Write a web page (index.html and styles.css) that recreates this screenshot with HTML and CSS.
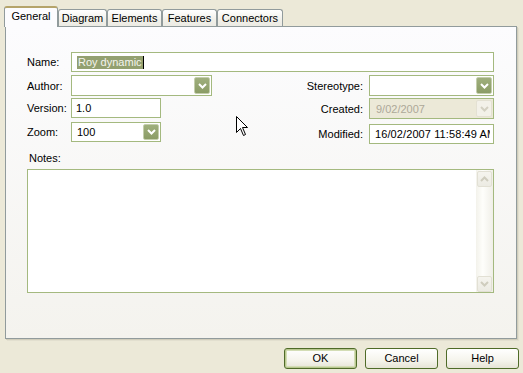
FILE: index.html
```html
<!DOCTYPE html>
<html>
<head>
<meta charset="utf-8">
<link rel="stylesheet" href="styles.css">
</head>
<body>
<div class="dialog">
  <div class="tabs">
    <div class="tab tab-active t-general">General</div>
    <div class="tab t-diagram">Diagram</div>
    <div class="tab t-elements">Elements</div>
    <div class="tab t-features">Features</div>
    <div class="tab t-connectors">Connectors</div>
  </div>
  <div class="panel">
    <div class="row row-name">
      <span class="lbl">Name:</span>
      <div class="field field-name"><span class="sel">Roy dynamic</span><span class="caret"></span></div>
    </div>
    <div class="cols">
      <div class="col col-left">
        <div class="row r-author">
          <span class="lbl">Author:</span>
          <div class="combo combo-author"><span class="val"></span><span class="ddbtn"><svg width="9" height="6" viewBox="0 0 9 6"><path d="M1 1 L4.5 4.5 L8 1" fill="none" stroke="#fff" stroke-width="2"/></svg></span></div>
        </div>
        <div class="row r-version">
          <span class="lbl">Version:</span>
          <div class="field field-version">1.0</div>
        </div>
        <div class="row r-zoom">
          <span class="lbl">Zoom:</span>
          <div class="combo combo-zoom"><span class="val">100</span><span class="ddbtn"><svg width="9" height="6" viewBox="0 0 9 6"><path d="M1 1 L4.5 4.5 L8 1" fill="none" stroke="#fff" stroke-width="2"/></svg></span></div>
        </div>
      </div>
      <div class="col col-right">
        <div class="row r-stereo">
          <span class="lbl-r">Stereotype:</span>
          <div class="combo combo-right"><span class="val"></span><span class="ddbtn"><svg width="9" height="6" viewBox="0 0 9 6"><path d="M1 1 L4.5 4.5 L8 1" fill="none" stroke="#fff" stroke-width="2"/></svg></span></div>
        </div>
        <div class="row r-created">
          <span class="lbl-r">Created:</span>
          <div class="combo combo-right combo-disabled"><span class="val">9/02/2007</span><span class="ddbtn ddbtn-disabled"><svg width="9" height="6" viewBox="0 0 9 6"><path d="M1 1 L4.5 4.5 L8 1" fill="none" stroke="#D3D0C2" stroke-width="2"/></svg></span></div>
        </div>
        <div class="row r-modified">
          <span class="lbl-r">Modified:</span>
          <div class="field field-modified"><span class="clip">16/02/2007 11:58:49 AM</span></div>
        </div>
      </div>
    </div>
    <div class="notes-label">Notes:</div>
    <div class="notes">
      <div class="notes-area"></div>
      <div class="vscroll">
        <span class="sbtn"><svg width="9" height="6" viewBox="0 0 9 6"><path d="M1 5 L4.5 1.5 L8 5" fill="none" stroke="#CFCDBE" stroke-width="2"/></svg></span>
        <span class="strack"></span>
        <span class="sbtn"><svg width="9" height="6" viewBox="0 0 9 6"><path d="M1 1 L4.5 4.5 L8 1" fill="none" stroke="#CFCDBE" stroke-width="2"/></svg></span>
      </div>
    </div>
  </div>
  <div class="buttons">
    <div class="btn btn-default">OK</div>
    <div class="btn">Cancel</div>
    <div class="btn">Help</div>
  </div>
  <svg class="cursor" width="13" height="21" viewBox="0 0 13 21"><path d="M0.5 0.5 L0.5 16.5 L4.5 12.5 L7.5 19.5 L9.5 18.5 L6.5 11.5 L11.5 11.5 Z" fill="#fff" stroke="#000" stroke-width="1"/></svg>
</div>
</body>
</html>
```

FILE: styles.css
```css
html, body {
  margin: 0;
  padding: 0;
}
body {
  background: #ECE9D8;
  font-family: "Liberation Sans", Arial, sans-serif;
  font-size: 11px;
  color: #000;
}
.dialog {
  position: relative;
  width: 523px;
  height: 373px;
  padding-top: 6px;
  box-sizing: border-box;
  overflow: hidden;
}
.tabs {
  display: flex;
  align-items: flex-end;
  height: 20px;
  padding-left: 4px;
  position: relative;
  z-index: 2;
}
.tab {
  box-sizing: border-box;
  height: 17px;
  border: 1px solid #919B9C;
  border-bottom: none;
  border-radius: 3px 3px 0 0;
  background: linear-gradient(#FFFFFF, #F1F0E9 60%, #ECEBE4);
  text-align: center;
  line-height: 16px;
  white-space: nowrap;
}
.tab-active {
  height: 21px;
  margin-bottom: -1px;
  background: #FCFCFE;
  border-top: 2px solid #B5A46A;
  line-height: 16px;
  padding-bottom: 3px;
}
.t-general { width: 54px; }
.t-diagram { width: 49px; }
.t-elements { width: 55px; }
.t-features { width: 55px; }
.t-connectors { width: 66px; }
.panel {
  margin-left: 5px;
  width: 512px;
  height: 313px;
  box-sizing: border-box;
  border: 1px solid #919B9C;
  background: linear-gradient(#FCFCFE, #F4F3EE);
  box-shadow: 1px 1px 0 #D0CDBB, 2px 2px 0 #E2DFCF;
  padding: 25px 22px 0 21px;
}
.row {
  display: flex;
  align-items: center;
}
.lbl {
  width: 44px;
  flex: none;
}
.row-name { height: 20px; }
.field {
  box-sizing: border-box;
  border: 1px solid #A4B97F;
  background: #fff;
  height: 100%;
  display: flex;
  align-items: center;
  padding-left: 4px;
  overflow: hidden;
  white-space: nowrap;
}
.field-name {
  width: 423px;
  padding-left: 5px;
}
.sel {
  background: #93A070;
  color: #F4F4EE;
  line-height: 13px;
  padding: 0 1px;
}
.caret {
  display: inline-block;
  width: 1px;
  height: 13px;
  background: #000;
}
.cols {
  display: flex;
  justify-content: space-between;
  margin-top: 3px;
}
.col-left { width: 186px; }
.r-author { height: 21px; }
.r-version { height: 20px; margin-top: 2px; }
.r-zoom { height: 20px; margin-top: 4px; }
.combo {
  box-sizing: border-box;
  border: 1px solid #A4B97F;
  background: #fff;
  height: 100%;
  display: flex;
  align-items: center;
  padding: 1px;
}
.combo .val {
  flex: 1;
  padding-left: 4px;
}
.combo-author { width: 141px; }
.combo-zoom { width: 90px; }
.field-version { width: 90px; }
.ddbtn {
  box-sizing: border-box;
  width: 16px;
  height: 100%;
  flex: none;
  background: linear-gradient(#9FAF7D, #8B9C66);
  border: 1px solid #C4CEAD;
  border-radius: 2px;
  display: flex;
  align-items: center;
  justify-content: center;
}
.col-right { width: 190px; }
.lbl-r {
  flex: 1;
  text-align: right;
  padding-right: 6px;
}
.r-stereo { height: 21px; }
.r-created { height: 21px; margin-top: 2px; }
.r-modified { height: 20px; margin-top: 5px; }
.combo-right { width: 125px; }
.combo-disabled {
  background: #ECE9D8;
  color: #ACA899;
}
.combo-disabled .val { padding-left: 5px; }
.ddbtn-disabled {
  background: #F3F1E9;
  border: 1px solid #E4E1D3;
}
.field-modified {
  width: 125px;
  padding-left: 5px;
}
.clip {
  display: block;
  width: 115px;
  overflow: hidden;
  letter-spacing: 0.1px;
}
.notes-label {
  margin-top: 8px;
  height: 13px;
  line-height: 13px;
  padding-left: 2px;
}
.notes {
  margin-top: 4px;
  height: 124px;
  box-sizing: border-box;
  border: 1px solid #A4B97F;
  background: #fff;
  display: flex;
}
.notes-area { flex: 1; }
.vscroll {
  width: 17px;
  display: flex;
  flex-direction: column;
  background: linear-gradient(90deg, #F3F2EB, #FEFEFB 40%, #F0EFE8);
  padding: 1px 0 0 1px;
  box-sizing: border-box;
}
.sbtn {
  box-sizing: border-box;
  width: 15px;
  height: 16px;
  flex: none;
  background: linear-gradient(#F5F4EE, #ECEBE3);
  border: 1px solid #E2E0D4;
  border-radius: 2px;
  display: flex;
  align-items: center;
  justify-content: center;
}
.strack { flex: 1; }
.buttons {
  display: flex;
  justify-content: flex-end;
  gap: 8px;
  margin-top: 9px;
  padding-right: 4px;
}
.btn {
  box-sizing: border-box;
  width: 73px;
  height: 21px;
  border: 1px solid #4F6B28;
  border-radius: 3px;
  background: linear-gradient(#FFFFFF, #F5F4EC 60%, #E6E4D6);
  text-align: center;
  line-height: 19px;
}
.btn-default {
  box-shadow: inset 0 0 0 1px #B9C78F, inset 0 0 0 2px #D3DDB5;
}
.cursor {
  position: absolute;
  left: 236px;
  top: 116px;
}
```
